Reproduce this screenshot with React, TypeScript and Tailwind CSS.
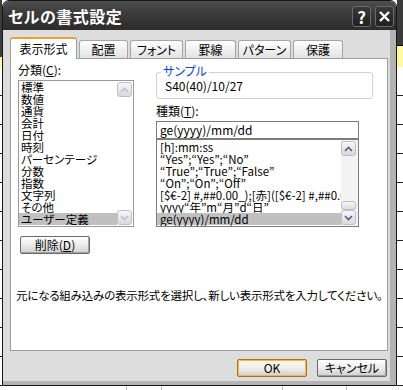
import React from "react";

const cats = ["標準", "数値", "通貨", "会計", "日付", "時刻", "パーセンテージ", "分数", "指数", "文字列", "その他", "ユーザー定義"];
const types = [
  "[h]:mm:ss",
  "“Yes”;“Yes”;“No”",
  "“True”;“True”;“False”",
  "“On”;“On”;“Off”",
  "[$€-2] #,##0.00_);[赤]([$€-2] #,##0.00)",
  "yyyy“年”m“月”d“日”",
  "ge(yyyy)/mm/dd",
];

function Chevron({ up, color }: { up: boolean; color: string }) {
  return (
    <svg width="9" height="6" viewBox="0 0 9 6">
      <path d={up ? "M1 5 L4.5 1.5 L8 5" : "M1 1 L4.5 4.5 L8 1"} fill="none" stroke={color} strokeWidth="1.6" />
    </svg>
  );
}

function ScrollBtn({ up, pale }: { up: boolean; pale: boolean }) {
  return (
    <div className="w-[15px] h-[15px] shrink-0 rounded-[3px] border border-[#b9c0cc] bg-gradient-to-b from-[#f7f7f7] to-[#d9d9d9] flex items-center justify-center">
      <Chevron up={up} color={pale ? "#aebfdc" : "#4d5f80"} />
    </div>
  );
}

function Btn({ children, def }: { children: React.ReactNode; def?: boolean }) {
  return (
    <div
      className={
        "w-[70px] h-[18px] rounded-[2px] border flex items-center justify-center leading-[14px] text-[12px] text-black " +
        (def
          ? "border-[#b07020] bg-gradient-to-b from-[#fff6e4] via-[#eeeeee] to-[#d0d0d0] shadow-[inset_0_0_0_1px_#f6b450]"
          : "border-[#6b6b6b] bg-gradient-to-b from-[#ffffff] via-[#ececec] to-[#cfcfcf] shadow-[inset_-1px_-1px_0_#a0a0a0]")
      }
    >
      {children}
    </div>
  );
}

function Ticks() {
  return (
    <div className="flex flex-col">
      {Array.from({ length: 11 }).map((_, i) => (
        <div key={i} className="h-[29px] border-b border-[#222]" />
      ))}
    </div>
  );
}

export default function App() {
  return (
    <div className="w-[403px] h-[390px] overflow-hidden bg-white flex font-['Noto_Sans_CJK_JP',sans-serif] [font-feature-settings:'palt'] text-black">
      {/* left strip (sheet behind) */}
      <div className="w-[2px] flex flex-col">
        <div className="h-[57px] bg-[#3c3c3c]" />
        <div className="h-[10px] bg-[#fff9a0]" />
        <Ticks />
      </div>

      <div className="w-[395px] flex flex-col">
        {/* window */}
        <div className="w-[395px] h-[386px] flex flex-col rounded-t-[7px] border border-[#161616] bg-[#dddddd] overflow-hidden">
          {/* title bar */}
          <div className="h-[29px] shrink-0 bg-gradient-to-b from-[#4e4e4e] via-[#383838] to-[#2c2c2c] flex items-center pl-[5px] pr-[2px]">
            <div className="text-white font-bold text-[16px] leading-[18px] tracking-[0.5px] pt-[1px]">セルの書式設定</div>
            <div className="flex-1" />
            <div className="flex gap-[4px] pt-[1px]">
              <div className="w-[19px] h-[21px] rounded-[3px] border border-[#6a6a6a] bg-gradient-to-b from-[#3a3a3a] to-[#202020] flex items-center justify-center text-white font-bold text-[17px] leading-none">?</div>
              <div className="w-[19px] h-[21px] rounded-[3px] border border-[#6a6a6a] bg-gradient-to-b from-[#3a3a3a] to-[#202020] flex items-center justify-center">
                <svg width="13" height="13" viewBox="0 0 13 13">
                  <path d="M2 2 L11 11 M11 2 L2 11" stroke="white" strokeWidth="2.4" />
                </svg>
              </div>
            </div>
          </div>

          {/* body */}
          <div className="flex-1 flex flex-col border-r-[6px] border-b-[4px] border-[#b3b3b3] pl-[7px] pr-[2px] pt-[7px]">
            {/* tabs */}
            <div className="h-[21px] flex items-end gap-[2px] text-[12px] relative z-10">
              <div className="w-[67px] h-[22px] -mb-px bg-white rounded-t-[3px] border-x border-[#9c9c9c] border-t-2 border-t-[#f0a030] flex items-center justify-center leading-[14px]">表示形式</div>
              {[
                ["配置", "w-[49px]"],
                ["フォント", "w-[53px]"],
                ["罫線", "w-[51px]"],
                ["パターン", "w-[53px]"],
                ["保護", "w-[50px]"],
              ].map(([t, w]) => (
                <div key={t} className={w + " h-[18px] rounded-t-[3px] border border-b-0 border-[#a5a5a5] bg-gradient-to-b from-white to-[#e2e2e2] flex items-center justify-center leading-[14px]"}>
                  {t}
                </div>
              ))}
            </div>

            {/* panel */}
            <div className="w-[378px] h-[293px] shrink-0 bg-white border border-[#9c9c9c] flex flex-col text-[12px]">
              <div className="flex">
                {/* left column */}
                <div className="w-[116px] ml-[7px] flex flex-col">
                  <div className="h-[21px] pt-[4px] leading-[14px]">
                    分類(<span className="underline">C</span>):
                  </div>
                  <div className="h-[147px] border border-[#9a9a9a] flex">
                    <div className="flex-1 flex flex-col text-[11.5px]">
                      {cats.map((c) => (
                        <div key={c} className={"h-[12px] leading-[12px] pl-[2px] whitespace-nowrap " + (c === "ユーザー定義" ? "bg-[#c0c0c0]" : "")}>
                          {c}
                        </div>
                      ))}
                    </div>
                    <div className="w-[16px] flex flex-col justify-between py-[1px] pr-[1px] bg-white">
                      <ScrollBtn up pale />
                      <ScrollBtn up={false} pale />
                    </div>
                  </div>
                  <div className="mt-[9px] ml-[2px]">
                    <Btn>
                      削除(<span className="underline">D</span>)
                    </Btn>
                  </div>
                </div>

                {/* right column */}
                <div className="w-[217px] ml-[22px] flex flex-col">
                  <div className="relative mt-[13px] h-[27px] rounded-[3px] border border-[#d2d2c8]">
                    <span className="absolute -top-[9px] left-[4px] bg-white px-[2px] leading-[14px] text-[#0a46d6]">サンプル</span>
                    <div className="pl-[8px] pt-[6px] leading-[14px]">S40(40)/10/27</div>
                  </div>
                  <div className="h-[22px] pt-[5px] leading-[14px]">
                    種類(<span className="underline">T</span>):
                  </div>
                  <div className="w-[203px] h-[18px] border border-[#7d7d7d] pl-[3px] leading-[16px]">ge(yyyy)/mm/dd</div>
                  <div className="w-[203px] h-[88px] border border-[#7d7d7d] flex">
                    <div className="flex-1 min-w-0 flex flex-col pt-[1px] overflow-x-hidden text-[11.5px]">
                      {types.map((t, i) => (
                        <div key={i} className={"h-[12px] leading-[12px] pl-[3px] whitespace-nowrap " + (i === 6 ? "bg-[#c0c0c0]" : "")}>
                          {t}
                        </div>
                      ))}
                    </div>
                    <div className="w-[17px] shrink-0 flex flex-col py-[1px] pr-[1px] bg-[#f3f3f3]">
                      <ScrollBtn up pale={false} />
                      <div className="flex-1" />
                      <div className="w-[15px] h-[9px] rounded-[3px] border border-[#b9c0cc] bg-gradient-to-b from-[#f7f7f7] to-[#dcdcdc]" />
                      <ScrollBtn up={false} pale={false} />
                    </div>
                  </div>
                </div>
              </div>

              <div className="mt-[34px] pl-[5px] leading-[14px] whitespace-nowrap text-[11.5px] tracking-[-0.2px]">
                元になる組み込みの表示形式を選択し、新しい表示形式を入力してください。
              </div>
            </div>

            {/* bottom buttons */}
            <div className="flex justify-end gap-[10px] mt-[8px] pr-[1px] text-[12px]">
              <Btn def>OK</Btn>
              <Btn>キャンセル</Btn>
            </div>
          </div>
        </div>
        {/* sheet below window */}
        <div className="flex-1 flex">
          <div className="w-[125px] border-r border-[#bbbbbb]" />
          <div className="w-[35px] border-r border-[#bbbbbb]" />
          <div className="w-[121px] border-r border-[#bbbbbb]" />
          <div className="w-[64px] border-r border-[#bbbbbb]" />
        </div>
      </div>

      {/* right strip */}
      <div className="w-[6px] flex flex-col">
        <div className="h-[46px] bg-[#3a3a3a] border-b border-black" />
        <div className="h-[21px] bg-[#fff9a0]" />
        <Ticks />
      </div>
    </div>
  );
}
